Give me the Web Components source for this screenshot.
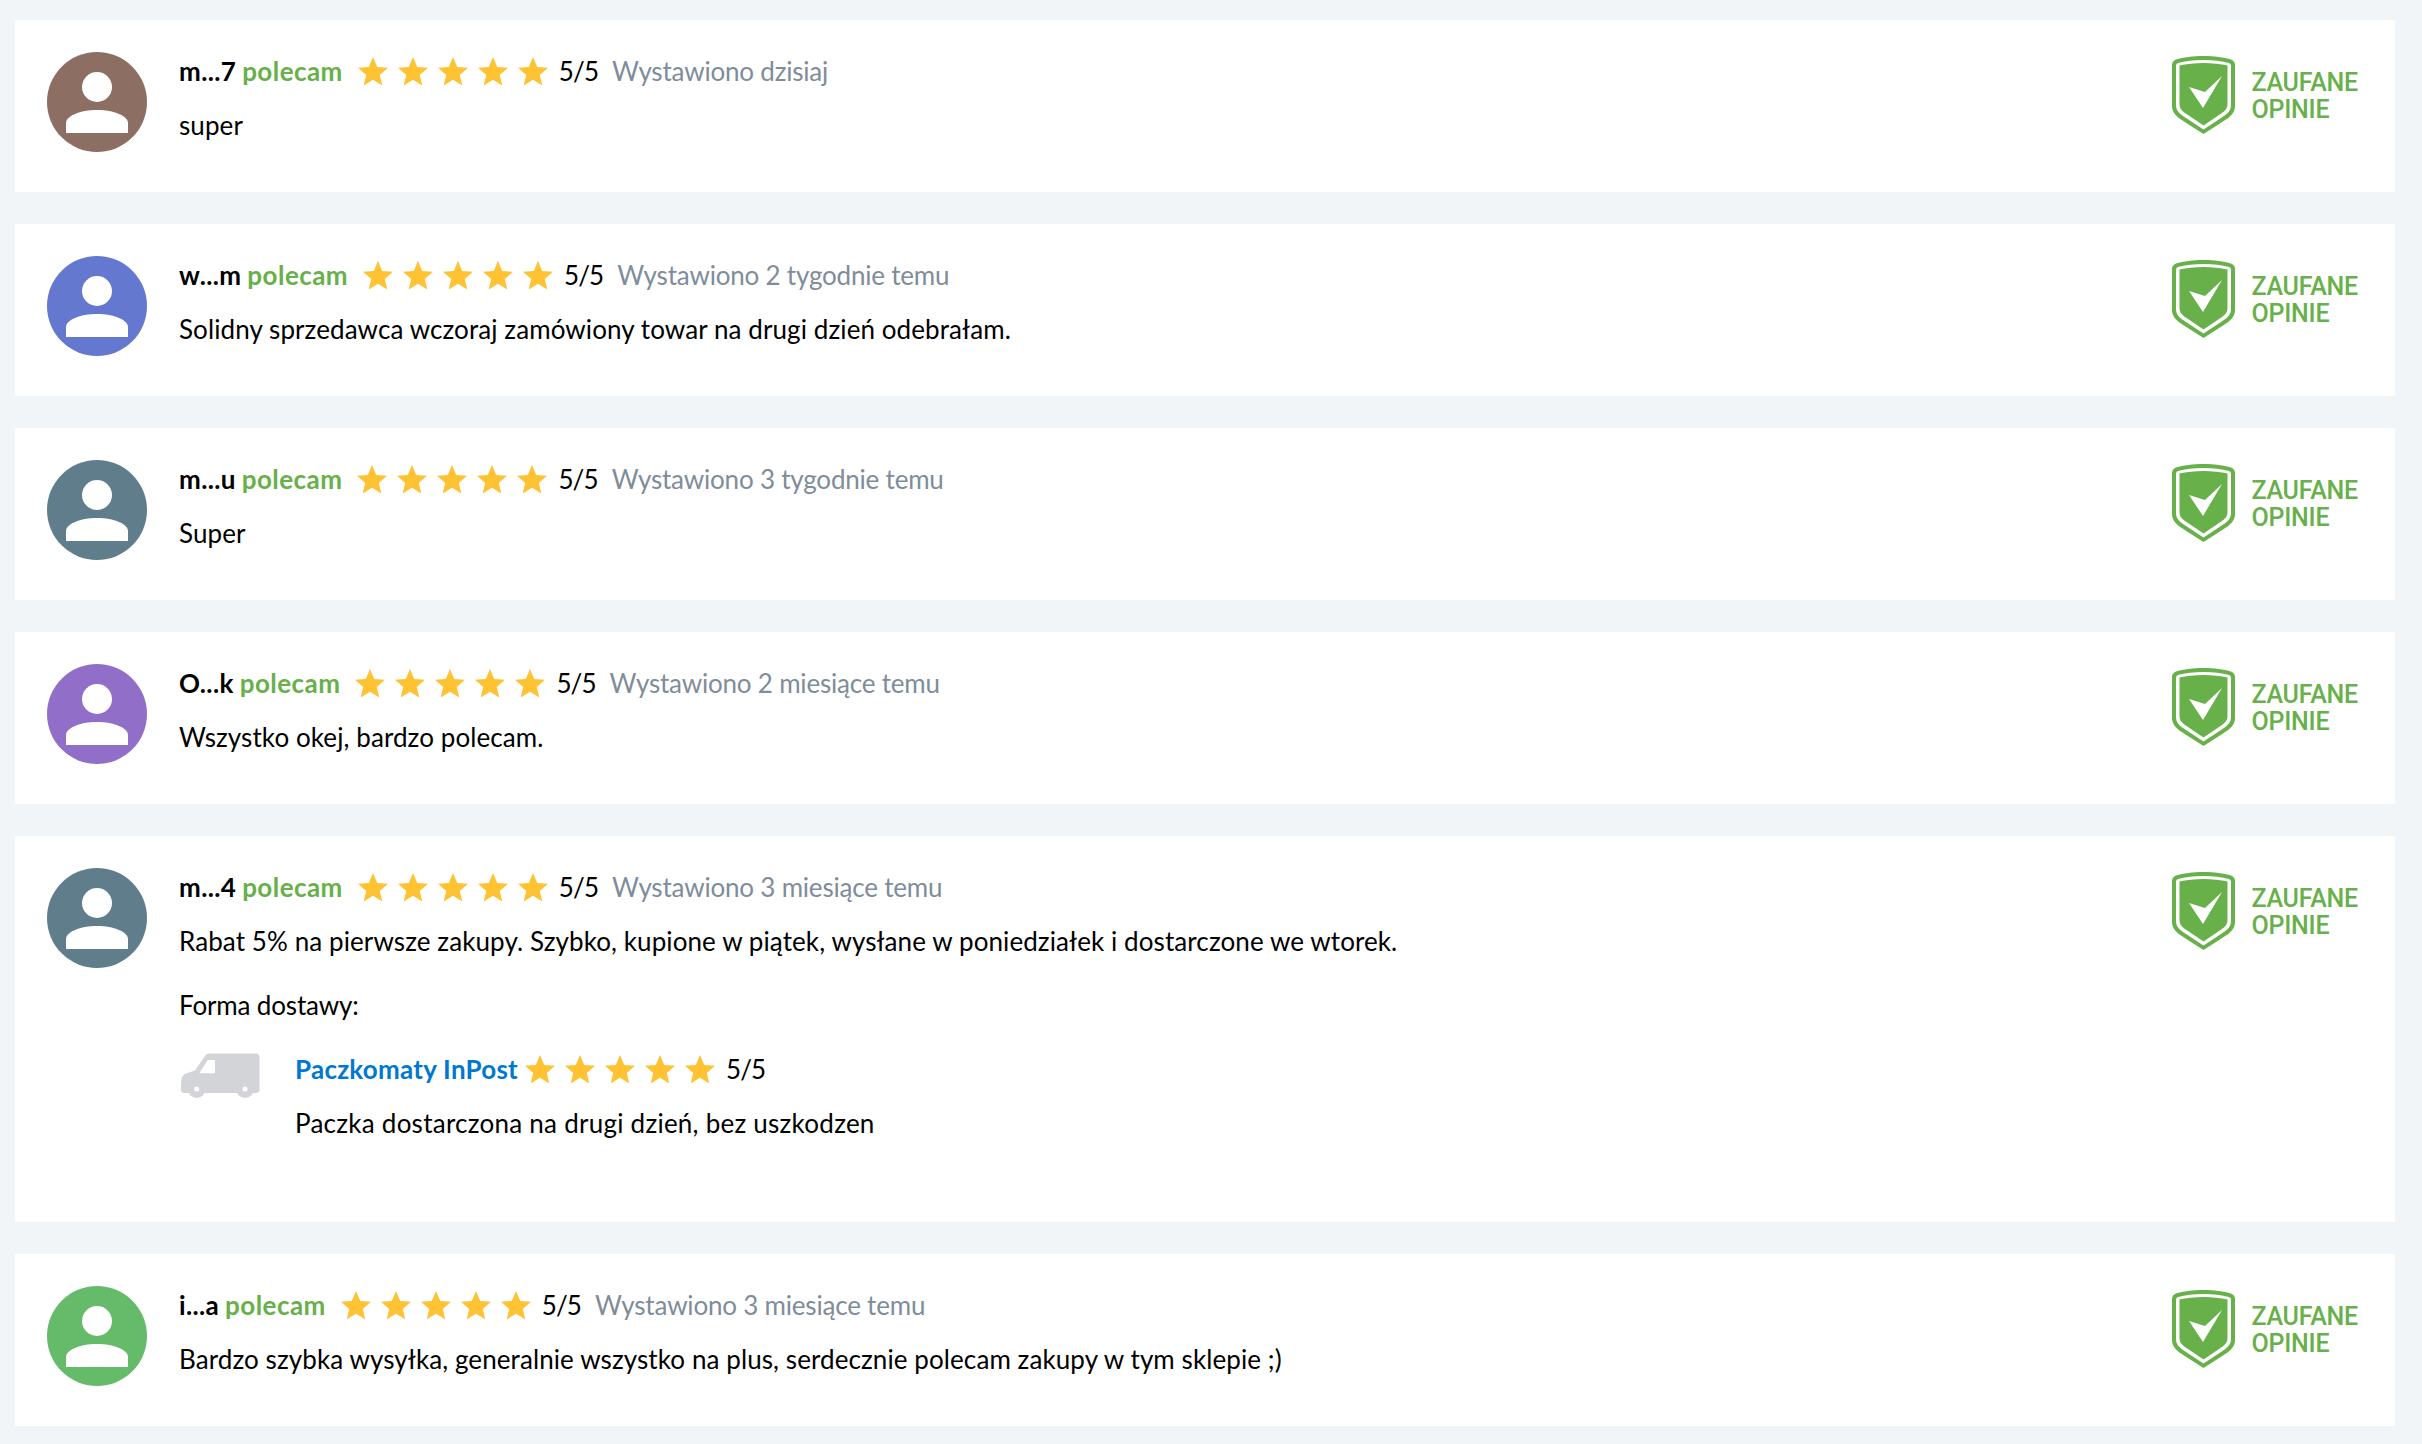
<!DOCTYPE html>
<html lang="pl">
<head>
<meta charset="utf-8">
<title>Opinie</title>
<style>
  html, body { margin: 0; background: #f1f5f8; }
  body { padding: 20px 27px 18px 15px; display: flex; flex-direction: column; gap: 32px; font-family: Lato, "Open Sans", sans-serif; }
</style>
</head>
<body>
<review-card nick="m...7" color="#8d6e63" when="Wystawiono dzisiaj">super</review-card>
<review-card nick="w...m" color="#6478cf" when="Wystawiono 2 tygodnie temu">Solidny sprzedawca wczoraj zamówiony towar na drugi dzień odebrałam.</review-card>
<review-card nick="m...u" color="#607d8b" when="Wystawiono 3 tygodnie temu">Super</review-card>
<review-card nick="O...k" color="#916fc9" when="Wystawiono 2 miesiące temu">Wszystko okej, bardzo polecam.</review-card>
<review-card nick="m...4" color="#607d8b" when="Wystawiono 3 miesiące temu">
  Rabat 5% na pierwsze zakupy. Szybko, kupione w piątek, wysłane w poniedziałek i dostarczone we wtorek.
  <delivery-info slot="extra" name="Paczkomaty InPost">Paczka dostarczona na drugi dzień, bez uszkodzen</delivery-info>
</review-card>
<review-card nick="i...a" color="#66bb6a" when="Wystawiono 3 miesiące temu">Bardzo szybka wysyłka, generalnie wszystko na plus, serdecznie polecam zakupy w tym sklepie ;)</review-card>

<script>
const STAR = "M15 0 L19.2 9.900 L30 10.800 L21.800 17.900 L24.300 28.400 L15 22.800 L5.700 28.400 L8.200 17.900 L0 10.800 L10.800 9.900 Z";

class StarRating extends HTMLElement {
  constructor() {
    super();
    this.attachShadow({ mode: "open" });
    let stars = "";
    for (let i = 0; i < 5; i++) stars += `<svg viewBox="0 0 30 29" width="30" height="29"><path d="${STAR}" fill="#ffc233"/></svg>`;
    this.shadowRoot.innerHTML = `
      <style>
        :host { display: inline-flex; align-items: center; gap: 10px; }
        svg { display: block; }
        span { margin-left: 1px; color: #000; letter-spacing: -0.9px; }
      </style>
      ${stars}<span>5/5</span>`;
  }
}
customElements.define("star-rating", StarRating);

class UserAvatar extends HTMLElement {
  constructor() {
    super();
    this.attachShadow({ mode: "open" });
    this.shadowRoot.innerHTML = `
      <style>
        :host { display: block; width: 100px; height: 100px; flex: none; }
        svg { display: block; }
      </style>
      <svg viewBox="0 0 100 100" width="100" height="100">
        <circle cx="50" cy="50" r="50" fill="${this.getAttribute("color")}"/>
        <circle cx="50" cy="35" r="15" fill="#fff"/>
        <path d="M19 81 V71 C19 64 33 58 50 58 S81 64 81 71 V81 Z" fill="#fff"/>
      </svg>`;
  }
}
customElements.define("user-avatar", UserAvatar);

class TrustBadge extends HTMLElement {
  constructor() {
    super();
    this.attachShadow({ mode: "open" });
    this.shadowRoot.innerHTML = `
      <style>
        :host { display: flex; align-items: flex-start; gap: 16px; flex: none; }
        svg { display: block; }
        div { font: 500 25px/27px Roboto, sans-serif; letter-spacing: -0.2px; color: #67b04a; padding-top: 13px; }
      </style>
      <svg viewBox="0 0 63 78" width="63" height="78">
        <path d="M31.5 0 C42 0 52 1.500 59 3.500 Q63 5 63 9 V50 C63 57 58 61 51 65.500 L31.500 78 L12 65.500 C5 61 0 57 0 50 V9 Q0 5 4 3.500 C11 1.500 21 0 31.500 0 Z" fill="#67b04a"/>
        <path d="M31.500 4 C41 4 50 5 57 7 Q59 7.500 59 10 V49 C59 55 55 58 49 62 L31.500 73.500 L14 62 C8 58 4 55 4 49 V10 Q4 7.500 6 7 C13 5 22 4 31.500 4 Z" fill="#fff"/>
        <path d="M31.500 7 C40 7 49 8 55.500 9.500 V48 C55.500 53 52 56 47 59 L31.500 69.500 L16 59 C11 56 7.500 53 7.500 48 V9.500 C14 8 23 7 31.500 7 Z" fill="#67b04a"/>
        <path d="M17 31 L31 52 L50 20 L33 36 Z" fill="#fff"/>
      </svg>
      <div>ZAUFANE<br>OPINIE</div>`;
  }
}
customElements.define("trust-badge", TrustBadge);

class DeliveryInfo extends HTMLElement {
  constructor() {
    super();
    this.attachShadow({ mode: "open" });
    this.shadowRoot.innerHTML = `
      <style>
        :host { display: block; padding-bottom: 41px; }
        .label { line-height: 36px; margin-top: 28px; letter-spacing: -0.15px; }
        .row { display: flex; margin-top: 28px; }
        .van { width: 116px; flex: none; }
        svg { display: block; margin: 2px 0 0 1px; filter: blur(0.6px); }
        .head { display: flex; align-items: center; height: 36px; gap: 7px; }
        b { color: #0078d2; font-weight: 700; letter-spacing: 0.25px; }
        .txt { line-height: 36px; margin-top: 18px; letter-spacing: 0.25px; }
      </style>
      <div class="label">Forma dostawy:</div>
      <div class="row">
        <div class="van">
          <svg viewBox="0 0 80 46" width="80" height="46">
            <path d="M25 3 Q26 0.500 29 0.500 H76 Q79.500 0.500 79.500 4 V37 Q79.500 40 76 40 H4 Q1 40 1 37 V30 Q1 22 6 20.500 L15 17.500 Z M27.700 7 L19.300 20.300 H35 V7 Z" fill="#d2d4d7" fill-rule="evenodd"/>
            <circle cx="16.700" cy="36" r="9" fill="#d2d4d7"/>
            <circle cx="65" cy="36" r="9" fill="#d2d4d7"/>
            <circle cx="16.700" cy="36" r="2.500" fill="#fff"/>
            <circle cx="65" cy="36" r="2.500" fill="#fff"/>
          </svg>
        </div>
        <div>
          <div class="head"><b>${this.getAttribute("name")}</b><star-rating></star-rating></div>
          <div class="txt"><slot></slot></div>
        </div>
      </div>`;
  }
}
customElements.define("delivery-info", DeliveryInfo);

class ReviewCard extends HTMLElement {
  constructor() {
    super();
    this.attachShadow({ mode: "open" });
    this.shadowRoot.innerHTML = `
      <style>
        :host { display: flex; align-items: flex-start; background: #fff; padding: 33px 37px 40px 32px; gap: 32px; color: #000; font-size: 26px; }
        .main { flex: 1; min-width: 0; }
        .head { display: flex; align-items: center; height: 36px; }
        b { font-weight: 700; letter-spacing: 0.35px; }
        .ok { color: #67b04a; font-weight: 700; margin-left: 6px; letter-spacing: 0.45px; }
        star-rating { margin-left: 15px; }
        .when { color: #7f8c9a; margin-left: 14px; letter-spacing: -0.2px; }
        .txt { line-height: 36px; margin-top: 18px; letter-spacing: 0.09px; }
        user-avatar { margin-top: -1px; }
        trust-badge { margin-top: 3px; }
      </style>
      <user-avatar color="${this.getAttribute("color")}"></user-avatar>
      <div class="main">
        <div class="head">
          <b>${this.getAttribute("nick")}</b><span class="ok">polecam</span>
          <star-rating></star-rating>
          <span class="when">${this.getAttribute("when")}</span>
        </div>
        <div class="txt"><slot></slot></div>
        <slot name="extra"></slot>
      </div>
      <trust-badge></trust-badge>`;
  }
}
customElements.define("review-card", ReviewCard);
</script>
</body>
</html>
